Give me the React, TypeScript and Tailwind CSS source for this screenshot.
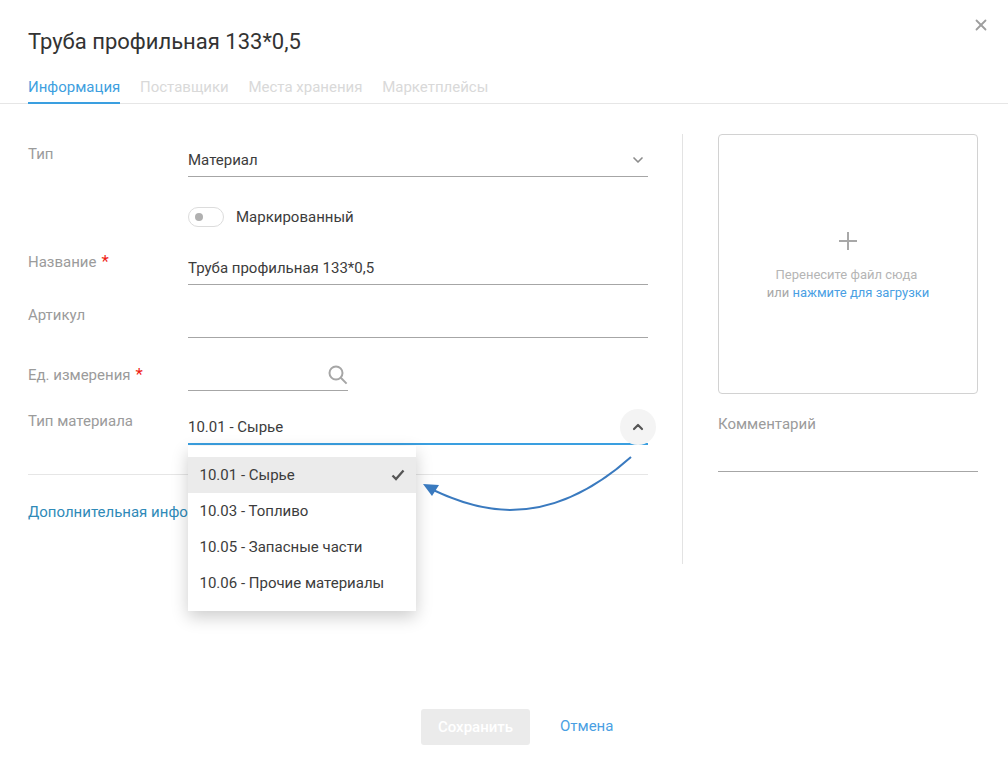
import React from 'react';
import { ChevronDown, ChevronUp, X } from 'lucide-react';

const options = ['10.01 - Сырье', '10.03 - Топливо', '10.05 - Запасные части', '10.06 - Прочие материалы'];
const tabs = ['Поставщики', 'Места хранения', 'Маркетплейсы'];

const Label = ({ text, required, top }: { text: string; required?: boolean; top: string }) => (
  <div className={`w-[160px] shrink-0 text-[15px] leading-[20px] text-[#9b9b9b] ${top}`}>
    {text}
    {required && <span className="ml-[5px] text-[17px] leading-[16px] text-[#f01e14]">*</span>}
  </div>
);

const App = () => {
  return (
    <div className="relative h-[763px] w-[1008px] overflow-hidden bg-white font-['Roboto',sans-serif] text-[#3c3c3c]">
      <button className="absolute right-[18px] top-[16px] text-[#9e9e9e]">
        <X className="h-[18px] w-[18px]" strokeWidth={2.4} />
      </button>

      <div className="border-b border-[#e6e6e6]">
        <h1 className="px-[28px] pt-[28px] text-[22px] font-normal leading-[28px] text-[#333333]">Труба профильная 133*0,5</h1>
        <div className="mt-[21px] flex gap-[19.7px] px-[28px] text-[15px] leading-[20px]">
          <div className="-mb-px h-[27px] border-b-2 border-[#3a9fe0] text-[#3f9fe0]">Информация</div>
          {tabs.map((tab) => (
            <div key={tab} className="text-[#d9d9d9]">{tab}</div>
          ))}
        </div>
      </div>

      <div className="flex px-[28px] pt-[30px]">
        <div className="w-[620px] pt-[9px]">
          <div className="flex h-[34px]">
            <Label text="Тип" top="pt-[1px]" />
            <div className="flex h-[34px] flex-1 items-center justify-between border-b border-[#a6a6a6] pt-[1px] text-[15px]">
              <span>Материал</span>
              <ChevronDown className="mr-[2px] h-[16px] w-[16px] text-[#8c8c8c]" strokeWidth={2.5} />
            </div>
          </div>

          <div className="ml-[160px] mt-[30px] flex h-[20px] items-center gap-[12px]">
            <div className="flex h-[20px] w-[36px] items-center rounded-full border border-[#dcdcdc] pl-[6px]">
              <div className="h-[8px] w-[8px] rounded-full bg-[#b0b0b0]" />
            </div>
            <span className="text-[15px]">Маркированный</span>
          </div>

          <div className="mt-[24px] flex">
            <Label text="Название" required top="pt-[1px]" />
            <div className="flex h-[34px] flex-1 items-center border-b border-[#a6a6a6] pt-[2px] text-[15px]">Труба профильная 133*0,5</div>
          </div>

          <div className="mt-[19px] flex">
            <Label text="Артикул" top="pt-[1px]" />
            <div className="h-[34px] flex-1 border-b border-[#a6a6a6]" />
          </div>

          <div className="mt-[19px] flex">
            <Label text="Ед. измерения" required top="pt-[8px]" />
            <div className="flex h-[34px] w-[160px] items-end justify-end border-b border-[#a6a6a6] pb-[5px]">
              <svg width="20" height="20" viewBox="0 0 20 20" fill="none" stroke="#a6a6a6" strokeWidth="2">
                <circle cx="8" cy="8" r="6.5" />
                <path d="M12.8 12.8 L18.6 18.6" />
              </svg>
            </div>
          </div>

          <div className="relative mt-[18px] flex">
            <Label text="Тип материала" top="pt-[2px]" />
            <div className="flex h-[36px] flex-1 items-center border-b-2 border-[#3a9fe0] pt-[2px] text-[15px]">10.01 - Сырье</div>
            <div className="absolute right-[-8px] top-0 flex h-[36px] w-[36px] items-center justify-center rounded-full bg-[#f4f4f4] text-[#555555]">
              <ChevronUp className="h-[16px] w-[16px]" strokeWidth={3.2} />
            </div>
          </div>

          <div className="mt-[29px] border-t border-[#e6e6e6] pt-[27px] text-[15px] leading-[20px] text-[#2f8ab8]">Дополнительная информация</div>
        </div>

        <div className="ml-[34px] h-[430px] w-px bg-[#e3e3e3]" />

        <div className="ml-[35px] w-[260px]">
          <div className="flex h-[260px] flex-col items-center rounded-[4px] border border-[#d2d2d2] pt-[89px] text-[13px] leading-[18px] text-[#b5b5b5]">
            <svg width="34" height="34" viewBox="0 0 34 34" stroke="#a8a8a8" strokeWidth="2" fill="none">
              <path d="M8 17 H26 M17 8 V26" />
            </svg>
            <div className="mt-[8px] pr-[3px]">Перенесите файл сюда</div>
            <div>
              <span className="text-[#a8a8a8]">или </span>
              <span className="text-[#4a9fe3]">нажмите для загрузки</span>
            </div>
          </div>
          <div className="mt-[20px] text-[15px] leading-[20px] text-[#9b9b9b]">Комментарий</div>
          <div className="h-[38px] border-b border-[#a6a6a6]" />
        </div>
      </div>

      <div className="absolute left-[188px] top-[446px] w-[228px] bg-white pb-[10px] pt-[11px] shadow-[0_6px_16px_rgba(0,0,0,0.2)]">
        {options.map((option, i) => (
          <div
            key={option}
            className={`flex h-[36px] items-center justify-between px-[11.5px] text-[15px] ${i === 0 ? 'bg-[#ebebeb]' : ''}`}
          >
            <span>{option}</span>
            {i === 0 && (
              <svg width="14" height="12" viewBox="0 0 14 12" fill="none" stroke="#555555" strokeWidth="2.3">
                <path d="M1.5 6.5 L5 10 L12.5 1.5" />
              </svg>
            )}
          </div>
        ))}
      </div>

      <svg className="absolute left-[415px] top-[450px]" width="225" height="70" viewBox="415 450 225 70" fill="none">
        <path d="M631 457 C585 498 545 510 510 510 C485 510 458 502 431 489" stroke="#3a7abf" strokeWidth="2" />
        <polygon points="423,484 439,485 432,496" fill="#3a7abf" />
      </svg>

      <div className="absolute left-[421px] top-[709px] flex items-center gap-[30px]">
        <div className="flex h-[36px] w-[109px] items-center justify-center rounded-[3px] bg-[#ebebeb] text-[15px] font-medium text-white">Сохранить</div>
        <div className="-mt-[2px] text-[15px] text-[#4a9fe3]">Отмена</div>
      </div>
    </div>
  );
};

export default App;
